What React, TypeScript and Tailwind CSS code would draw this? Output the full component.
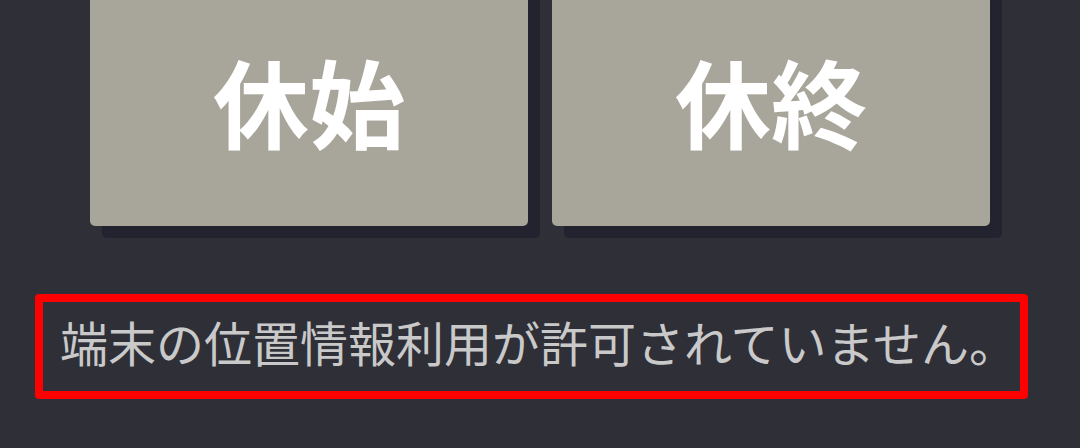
import React from "react";

export default function App() {
  const font = { fontFamily: '"Noto Sans CJK JP", "Noto Sans", sans-serif' };
  return (
    <div
      className="w-[1080px] h-[448px] overflow-hidden bg-[#2f2f38]"
      style={font}
    >
      <div className="-mt-[26px] grid grid-cols-2 gap-6 px-[90px]">
        <button className="flex h-[252px] items-center justify-center rounded-[5px] bg-[#a8a59b] text-[96px] font-bold leading-none text-white shadow-[12px_12px_0_0_#22232e]">
          休始
        </button>
        <button className="flex h-[252px] items-center justify-center rounded-[5px] bg-[#a8a59b] text-[96px] font-bold leading-none text-white shadow-[12px_12px_0_0_#22232e]">
          休終
        </button>
      </div>
      <div className="ml-[35px] mt-[68px] w-[993px] rounded-[4px] border-8 border-[#ff0000] pl-[17px] pt-[15px] pb-[26px]">
        <p className="whitespace-nowrap text-[48px] leading-none text-[#c9c9c9]">
          端末の位置情報利用が許可されていません。
        </p>
      </div>
    </div>
  );
}
